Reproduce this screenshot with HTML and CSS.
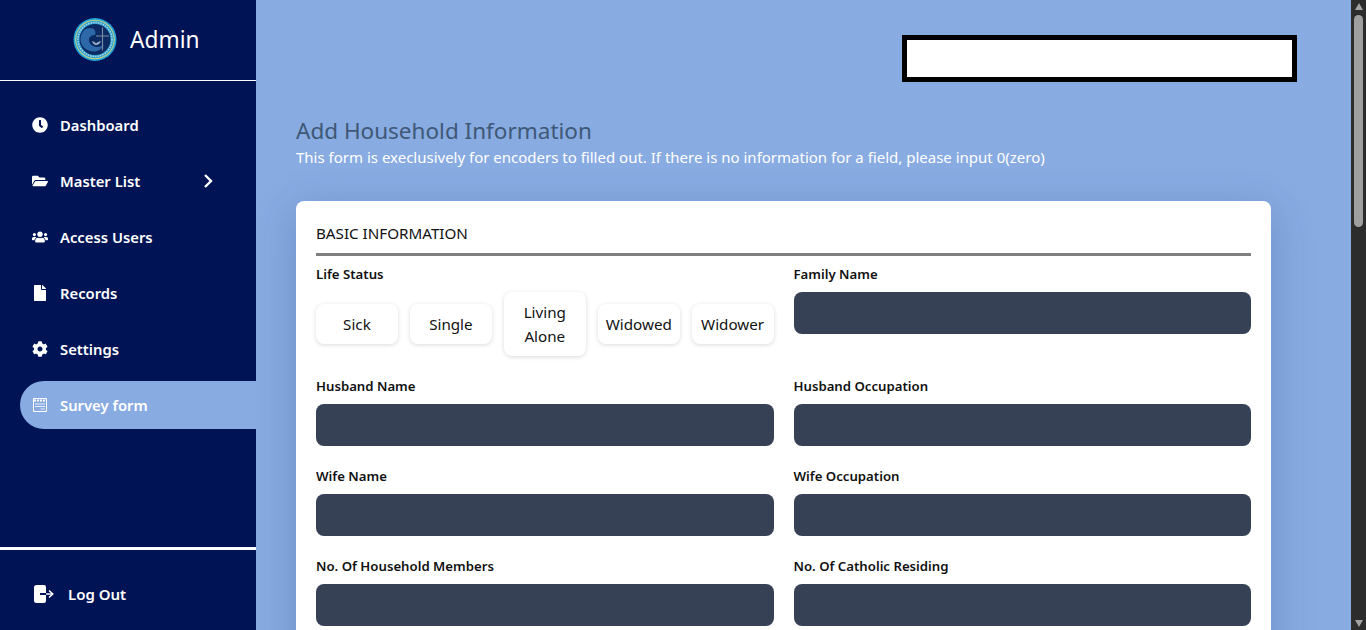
FILE: index.html
```html
<!DOCTYPE html>
<html lang="en">
<head>
  <meta charset="UTF-8">
  <meta name="viewport" content="width=device-width, initial-scale=1.0">
  <title>Add Household Information</title>
  <link rel="stylesheet" href="styles.css">
</head>
<body>

  <aside class="sidebar">
    <div class="brand">
      <svg class="brand-logo" viewBox="0 0 44 44">
        <circle cx="22" cy="21.500" r="21.500" fill="#22a5da"/>
        <circle cx="22" cy="21.500" r="19.800" fill="#c9d27a"/>
        <circle cx="22" cy="21.500" r="18.800" fill="#2f9fd2"/>
        <circle cx="22" cy="21.500" r="17" fill="none" stroke="#a9d6e6" stroke-width="1.500" stroke-dasharray="1.500 1"/>
        <circle cx="22" cy="21.500" r="15.500" fill="#0b2a62"/>
        <path d="M7.500 22c0-7.500 4-12 9.500-12 4.500 0 6.500 3.500 5 7-3.500 0-6 2-6 5 0 4 4 7 8 7 3 0 5-1 7-2-2 4-6 6.500-10 6.500-7.500 0-13.500-5.500-13.500-11.500z" fill="#2d68a8"/>
        <path d="M19 23c2 .5 3 1.500 4 2.500 1-1 3-2 5-2.500-1 2.500-3 4-5 4s-3-1.500-4-4z" fill="#9fb0c6"/>
        <path d="M29.500 9.500v23M23 18h13" stroke="#7f8aa3" stroke-width="1.100" fill="none"/>
      </svg>
      <span class="brand-name">Admin</span>
    </div>

    <nav class="side-nav">
      <a href="#" class="nav-item">
        <svg class="nav-icon" viewBox="0 0 512 512"><path d="M256,8C119,8,8,119,8,256S119,504,256,504,504,393,504,256,393,8,256,8Zm92.49,313h0l-20,25a16,16,0,0,1-22.49,2.5h0l-67-49.72a40,40,0,0,1-15-31.23V112a16,16,0,0,1,16-16h32a16,16,0,0,1,16,16V256l58,42.5A16,16,0,0,1,348.49,321Z"/></svg>
        Dashboard
      </a>
      <a href="#" class="nav-item">
        <svg class="nav-icon" viewBox="0 0 576 512"><path d="M572.694 292.093L500.27 416.248A63.997 63.997 0 0 1 444.989 448H45.025c-18.523 0-30.064-20.093-20.731-36.093l72.424-124.155A64 64 0 0 1 152 256h399.964c18.523 0 30.064 20.093 20.73 36.093zM152 224h328v-48c0-26.51-21.49-48-48-48H272l-64-64H48C21.49 64 0 85.49 0 112v278.046l69.077-118.418C86.214 242.25 117.989 224 152 224z"/></svg>
        Master List
        <svg class="nav-chevron" viewBox="0 0 10 16"><path d="M2 2l6 6-6 6"/></svg>
      </a>
      <a href="#" class="nav-item">
        <svg class="nav-icon" viewBox="0 0 640 512"><path d="M96 224c35.3 0 64-28.7 64-64s-28.7-64-64-64-64 28.7-64 64 28.7 64 64 64zm448 0c35.3 0 64-28.7 64-64s-28.7-64-64-64-64 28.7-64 64 28.7 64 64 64zm32 32h-64c-17.6 0-33.5 7.1-45.1 18.6 40.3 22.1 68.9 62 75.1 109.4h66c17.7 0 32-14.3 32-32v-32c0-35.3-28.7-64-64-64zm-256 0c61.9 0 112-50.1 112-112S381.9 32 320 32 208 82.1 208 144s50.1 112 112 112zm76.8 32h-8.3c-20.8 10-43.9 16-68.5 16s-47.6-6-68.5-16h-8.3C179.6 288 128 339.6 128 403.2V432c0 26.5 21.5 48 48 48h288c26.5 0 48-21.5 48-48v-28.8c0-63.6-51.6-115.2-115.2-115.2zm-223.7-13.4C161.5 263.1 145.6 256 128 256H64c-35.3 0-64 28.7-64 64v32c0 17.7 14.3 32 32 32h65.9c6.3-47.4 34.9-87.3 75.2-109.4z"/></svg>
        Access Users
      </a>
      <a href="#" class="nav-item">
        <svg class="nav-icon" viewBox="0 0 384 512"><path d="M224 136V0H24C10.7 0 0 10.7 0 24v464c0 13.3 10.7 24 24 24h336c13.3 0 24-10.7 24-24V160H248c-13.2 0-24-10.8-24-24zm160-14.1v6.1H256V0h6.1c6.4 0 12.5 2.5 17 7l97.9 98c4.5 4.5 7 10.6 7 16.9z"/></svg>
        Records
      </a>
      <a href="#" class="nav-item">
        <svg class="nav-icon" viewBox="0 0 512 512"><path d="M487.4 315.7l-42.6-24.6c4.3-23.2 4.3-47 0-70.2l42.6-24.6c4.9-2.8 7.1-8.6 5.5-14-11.1-35.6-30-67.8-54.7-94.6-3.8-4.1-10-5.1-14.8-2.3L380.8 110c-17.9-15.4-38.5-27.3-60.8-35.1V25.8c0-5.6-3.9-10.5-9.4-11.7-36.7-8.2-74.3-7.8-109.2 0-5.5 1.2-9.4 6.1-9.4 11.7V75c-22.2 7.9-42.8 19.8-60.8 35.1L88.7 85.5c-4.9-2.8-11-1.9-14.8 2.3-24.7 26.7-43.6 58.9-54.7 94.6-1.7 5.4.6 11.2 5.5 14L67.3 221c-4.3 23.2-4.3 47 0 70.2l-42.6 24.6c-4.9 2.8-7.1 8.6-5.5 14 11.1 35.6 30 67.8 54.7 94.6 3.8 4.1 10 5.1 14.8 2.3l42.6-24.6c17.9 15.4 38.5 27.3 60.8 35.1v49.2c0 5.6 3.9 10.5 9.4 11.7 36.7 8.2 74.3 7.8 109.2 0 5.5-1.2 9.4-6.1 9.4-11.7v-49.2c22.2-7.9 42.8-19.8 60.8-35.1l42.6 24.6c4.9 2.8 11 1.9 14.8-2.3 24.7-26.7 43.6-58.9 54.7-94.6 1.5-5.5-.7-11.3-5.6-14.1zM256 336c-44.1 0-80-35.9-80-80s35.9-80 80-80 80 35.9 80 80-35.9 80-80 80z"/></svg>
        Settings
      </a>
      <a href="#" class="nav-item active">
        <svg class="nav-icon nav-icon-line" viewBox="0 0 16 16"><path d="M1.500 1.500h13v13h-13z"/><path d="M2 3.500h12" stroke-width="2" stroke-dasharray="2 1"/><path d="M3 7h10M3 9.500h10M8.500 12H13" stroke-opacity="0.8"/></svg>
        Survey form
      </a>
    </nav>

    <div class="side-bottom">
      <a href="#" class="logout">
        <svg class="logout-icon" viewBox="0 0 20 18"><path d="M2.500 0H10a2 2 0 0 1 2 2v14a2 2 0 0 1-2 2H2.500A2.500 2.500 0 0 1 0 15.500v-13A2.500 2.500 0 0 1 2.500 0z" fill="#fff"/><path d="M6 9h6" stroke="#001355" stroke-width="2" fill="none"/><path d="M12 9h6.500" stroke="#fff" stroke-width="1.500" fill="none"/><path d="M15 5.500L18.800 9 15 12.500" stroke="#fff" stroke-width="1.500" fill="none"/></svg>
        Log Out
      </a>
    </div>
  </aside>

  <main class="content">
    <div class="topbar">
      <div class="user-box"></div>
    </div>

    <h1 class="page-title">Add Household Information</h1>
    <p class="page-note">This form is execlusively for encoders to filled out. If there is no information for a field, please input 0(zero)</p>

    <form class="form-card">
      <h2 class="section-title">BASIC INFORMATION</h2>

      <div class="form-grid">
        <div class="field">
          <label class="field-label">Life Status</label>
          <div class="status-row">
            <button type="button" class="status-btn">Sick</button>
            <button type="button" class="status-btn">Single</button>
            <button type="button" class="status-btn">Living Alone</button>
            <button type="button" class="status-btn">Widowed</button>
            <button type="button" class="status-btn">Widower</button>
          </div>
        </div>
        <div class="field">
          <label class="field-label">Family Name</label>
          <input type="text" class="field-input">
        </div>
        <div class="field">
          <label class="field-label">Husband Name</label>
          <input type="text" class="field-input">
        </div>
        <div class="field">
          <label class="field-label">Husband Occupation</label>
          <input type="text" class="field-input">
        </div>
        <div class="field">
          <label class="field-label">Wife Name</label>
          <input type="text" class="field-input">
        </div>
        <div class="field">
          <label class="field-label">Wife Occupation</label>
          <input type="text" class="field-input">
        </div>
        <div class="field">
          <label class="field-label">No. Of Household Members</label>
          <input type="text" class="field-input">
        </div>
        <div class="field">
          <label class="field-label">No. Of Catholic Residing</label>
          <input type="text" class="field-input">
        </div>
      </div>
    </form>
  </main>

  <div class="scrollbar">
    <span class="scroll-arrow scroll-up"></span>
    <div class="scroll-track">
      <div class="scroll-thumb"></div>
    </div>
    <span class="scroll-arrow scroll-down"></span>
  </div>

</body>
</html>
```

FILE: styles.css
```css
/* General Styles */
* {
  box-sizing: border-box;
}

body {
  margin: 0;
  height: 100vh;
  display: flex;
  overflow: hidden;
  font-family: "Noto Sans", sans-serif;
  background-color: #88abe2;
}

/* Sidebar */
.sidebar {
  width: 256px;
  height: 100vh;
  flex-shrink: 0;
  display: flex;
  flex-direction: column;
  background-color: #001355;
  color: #fff;
}

.brand {
  height: 81px;
  padding: 18px 0 0 73px;
  display: flex;
  align-items: flex-start;
  gap: 13px;
  border-bottom: 1px solid #fff;
}

.brand-logo {
  width: 44px;
  height: 44px;
}

.brand-name {
  font-size: 22.7px;
  line-height: 44px;
}

.side-nav {
  flex: 1;
  padding: 20px 0 0 20px;
  display: flex;
  flex-direction: column;
  gap: 8px;
}

.nav-item {
  height: 48px;
  padding-left: 12px;
  display: flex;
  align-items: center;
  color: #fff;
  font-size: 14.8px;
  font-weight: 600;
  text-decoration: none;
  border-radius: 24px 0 0 24px;
}

.nav-item.active {
  background-color: #88abe2;
}

.nav-icon {
  width: 16px;
  height: 16px;
  margin-right: 12px;
  fill: #fff;
}

.nav-icon-line {
  fill: none;
  stroke: #fff;
  stroke-width: 1;
}

.nav-chevron {
  width: 10px;
  height: 16px;
  margin-left: auto;
  margin-right: 43px;
  fill: none;
  stroke: #fff;
  stroke-width: 2.4;
}

.side-bottom {
  height: 83px;
  padding: 34px 0 0 34px;
  border-top: 3px solid #fff;
}

.logout {
  display: flex;
  align-items: center;
  gap: 14px;
  color: #fff;
  font-size: 15px;
  font-weight: 600;
  text-decoration: none;
}

.logout-icon {
  width: 20px;
  height: 18px;
}

/* Main content */
.content {
  flex: 1;
  height: 100vh;
  overflow: hidden;
  padding: 35px 54px 0 40px;
}

.topbar {
  display: flex;
  justify-content: flex-end;
}

.user-box {
  width: 395px;
  height: 47px;
  background-color: #fff;
  border: 5px solid #000;
}

.page-title {
  margin: 35px 0 0;
  font-size: 22.5px;
  font-weight: 400;
  line-height: 28px;
  color: #3f5876;
}

.page-note {
  margin: 0;
  font-size: 15px;
  line-height: 24px;
  color: #fff;
}

.form-card {
  margin: 32px 26px 0 0;
  min-height: 500px;
  padding: 20px;
  background-color: #fff;
  border-radius: 8px;
  box-shadow: 0 10px 40px rgba(30, 60, 120, 0.25);
}

.section-title {
  margin: 0;
  padding-bottom: 8px;
  font-size: 15.2px;
  font-weight: 400;
  line-height: 24px;
  color: #111;
  border-bottom: 3px solid #808080;
}

.form-grid {
  margin-top: 8px;
  display: grid;
  grid-template-columns: 1fr 1fr;
  gap: 20px;
}

.field-label {
  display: block;
  margin-bottom: 8px;
  font-size: 13.2px;
  font-weight: 600;
  line-height: 20px;
  color: #111;
}

.field-input {
  display: block;
  width: 100%;
  height: 42px;
  background-color: #374155;
  border: none;
  border-radius: 8px;
}

.status-row {
  display: flex;
  align-items: center;
  gap: 12px;
}

.status-btn {
  flex: 1 1 0;
  min-width: 0;
  padding: 8px;
  font-family: inherit;
  font-size: 15.2px;
  line-height: 24px;
  color: #111;
  background-color: #fff;
  border: none;
  border-radius: 8px;
  box-shadow: 0 1px 4px rgba(0, 0, 0, 0.15);
}

/* Page scrollbar */
.scrollbar {
  width: 15px;
  height: 100vh;
  flex-shrink: 0;
  display: flex;
  flex-direction: column;
  align-items: center;
  background-color: #2c2c2c;
}

.scroll-arrow {
  width: 0;
  height: 0;
  flex-shrink: 0;
  border-left: 4.5px solid transparent;
  border-right: 4.5px solid transparent;
}

.scroll-up {
  margin: 3px 0 5px;
  border-bottom: 7px solid #a3a3a3;
}

.scroll-down {
  margin: 5px 0 3px;
  border-top: 7px solid #a3a3a3;
}

.scroll-track {
  flex: 1;
  width: 9px;
}

.scroll-thumb {
  width: 9px;
  height: 212px;
  background-color: #9f9f9f;
  border-radius: 5px;
}
```
